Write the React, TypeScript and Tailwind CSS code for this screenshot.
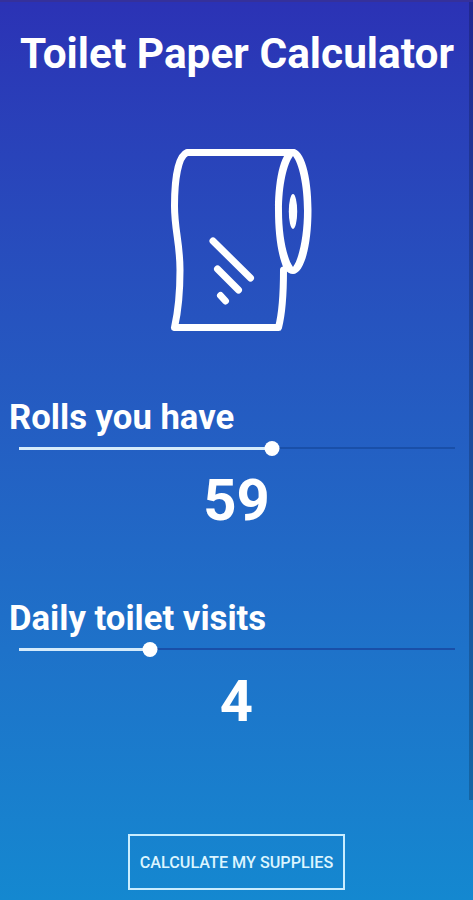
import React from 'react';

interface SliderProps {
  label: string;
  value: number;
  percent: number;
}

const Slider: React.FC<SliderProps> = ({ label, value, percent }) => {
  return (
    <section className="h-[201px]">
      <h2 className="pl-[9px] text-[34.7px] leading-[40px] font-bold whitespace-nowrap">{label}</h2>
      <div className="relative mt-[3px] mr-[14px] ml-[19px] flex h-[16px] items-center">
        <div className="h-[3px] bg-[#d5ebfb]" style={{ width: `${percent}%` }} />
        <div className="h-[2px] flex-1 bg-[#194fa8]" />
        <div
          className="absolute size-[15px] -translate-x-1/2 rounded-full bg-white"
          style={{ left: `${percent}%` }}
        />
      </div>
      <p className="mt-[12px] pl-[4px] text-center text-[58px] leading-[64px] font-bold">{value}</p>
    </section>
  );
};

const ToiletPaperIcon: React.FC = () => {
  return (
    <svg
      className="mx-auto block h-[200px] w-[160px]"
      viewBox="0 0 160 200"
      fill="none"
      stroke="white"
      strokeWidth="7"
      strokeLinecap="round"
      strokeLinejoin="round"
    >
      {/* sheet */}
      <path d="M133 12.500H27C18 16 14.500 40 14.500 66C14.500 90 20 103 20 130C20 155 18 172 14.500 187.500H118.500C122 174 123.500 158 123.500 130" />
      {/* end of the roll */}
      <path
        fill="white"
        fillRule="evenodd"
        stroke="none"
        d="M133 9C144 9 151.500 36 151.500 70C151.500 106 144 134 133 134C130 134 127 132 124 129C118 116 115 94 115 70C115 36 122 9 133 9ZM133 16C127 24 122 45 122 71C122 96 127 119 133 127C139 119 144 96 144 71C144 45 139 24 133 16Z"
      />
      <ellipse cx="133" cy="71.500" rx="4.200" ry="17.500" fill="white" stroke="none" />
      <path d="M53 101L90.500 138M57.500 129L78.500 150M60.500 155.500L65.500 161" />
    </svg>
  );
};

export default function App() {
  return (
    <div className="flex h-[900px] w-[473px] overflow-hidden border-t-2 border-[#35309b] bg-linear-to-b from-[#2b32b5] to-[#1488d0] font-['Roboto',sans-serif] text-white">
      <main className="w-[469px] shrink-0">
        <h1 className="mt-[26px] pl-[20px] text-[42.4px] leading-[52px] font-bold whitespace-nowrap">
          Toilet Paper Calculator
        </h1>
        <div className="mt-[60px] pl-[11px]">
          <ToiletPaperIcon />
        </div>
        <div className="mt-[57px]">
          <Slider label="Rolls you have" value={59} percent={58} />
          <Slider label="Daily toilet visits" value={4} percent={30} />
        </div>
        <button className="mt-[35px] ml-[128px] flex h-[56px] w-[217px] items-center justify-center border-2 border-[#c9edff] pt-[2px] text-[16.2px] font-medium whitespace-nowrap text-[#dcf5ff]">
          CALCULATE MY SUPPLIES
        </button>
      </main>
      <div className="h-[798px] w-1 shrink-0 bg-black/20" />
    </div>
  );
}
